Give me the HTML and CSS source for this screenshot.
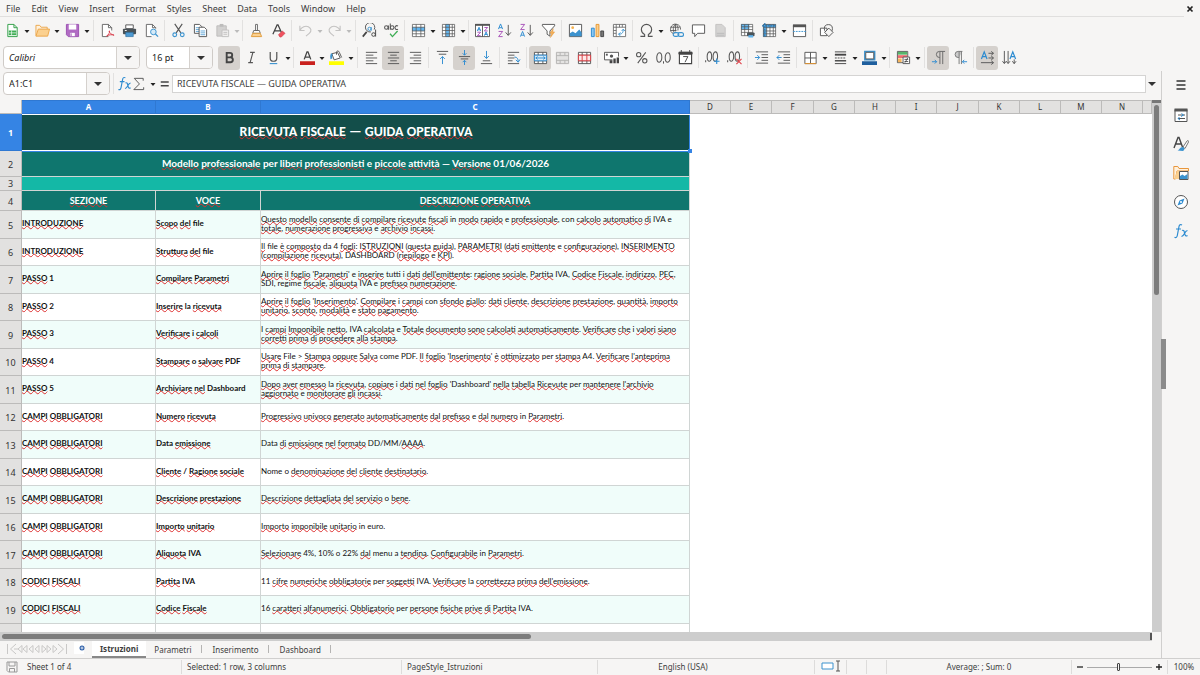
FILE: index.html
```html
<!DOCTYPE html>
<html lang="it">
<head>
<meta charset="utf-8">
<title>Ricevuta fiscale</title>
<link rel="stylesheet" href="styles.css">
</head>
<body>
<svg class="sprite" aria-hidden="true">
  <symbol id="new" viewBox="0 0 16 16"><path d="M3 1.5h6.500l3.500 3.500v9.500H3z" fill="#fff" stroke="#2f9e44"/><path d="M9.500 1.500V5H13" fill="none" stroke="#2f9e44"/><path d="M4 8h8v5H4z" fill="#3fae55"/><path d="M4 10.500h8M7 8v5" stroke="#fff" stroke-width=".7"/></symbol>
  <symbol id="open" viewBox="0 0 16 16"><path d="M1 13.500V2.500h4l1.500 2H13V7" fill="#fff1dc" stroke="#eba54a"/><path d="M3.500 6.500h12l-2 7.500H1z" fill="#fbd08f" stroke="#eba54a"/></symbol>
  <symbol id="save" viewBox="0 0 16 16"><path d="M1.500 1.500h13v13h-11l-2-2z" fill="#b16bc4" stroke="#9a4fb0"/><path d="M4 1.500h8v5.500H4z" fill="#fff"/><path d="M5 10h6v4.500H5z" fill="#fff" stroke="#9a4fb0" stroke-width=".7"/><path d="M6.500 11v3" stroke="#9a4fb0"/></symbol>
  <symbol id="pdf" viewBox="0 0 16 16"><path d="M12.500 8V5L9 1.500H2.500v13H9" fill="#fff" stroke="#666"/><path d="M9 1.500V5h3.500" fill="none" stroke="#666"/><path d="M7 14c2-1 3.500-4 3.200-5.500-1-1-.8 3 4.800 4.500-2-1-6-.5-8 1z" fill="none" stroke="#d83a48"/></symbol>
  <symbol id="print" viewBox="0 0 16 16"><path d="M4 2h8v4H4z" fill="#fff" stroke="#555"/><rect x="1" y="6" width="14" height="6" rx="1" fill="#4a5257"/><path d="M4 10h8v4.500H4z" fill="#4d9ad3" stroke="#2e6e9e" stroke-width=".7"/><path d="M3 8h2" stroke="#fff"/></symbol>
  <symbol id="preview" viewBox="0 0 16 16"><path d="M12.500 6V5L9 1.500H2.500v13H8" fill="#fff" stroke="#666"/><path d="M9 1.500V5h3.500" fill="none" stroke="#666"/><circle cx="10" cy="9.500" r="3" fill="#d5eaf8" stroke="#3c93cf"/><path d="M12.200 11.700 15 14.500" stroke="#3c93cf" stroke-width="1.300"/></symbol>
  <symbol id="cut" viewBox="0 0 16 16"><path d="M4 1l6.500 9.500M12 1 5.500 10.500" stroke="#555" stroke-width="1.200"/><circle cx="4" cy="12.500" r="2" fill="none" stroke="#3c93cf" stroke-width="1.200"/><circle cx="12" cy="12.500" r="2" fill="none" stroke="#3c93cf" stroke-width="1.200"/></symbol>
  <symbol id="copy" viewBox="0 0 16 16"><path d="M1.500 1.500H7L9.500 4v7h-8z" fill="#fff" stroke="#555"/><path d="M3 5h4M3 7h4M3 9h4" stroke="#3c93cf" stroke-width=".8"/><path d="M6.500 4.500H12L14.500 7v7.500h-8z" fill="#fff" stroke="#555"/><path d="M8 8.500h5M8 10.500h5M8 12.500h5" stroke="#3c93cf" stroke-width=".8"/></symbol>
  <symbol id="paste" viewBox="0 0 16 16"><path d="M2 3h10v11H2z" fill="#d2d1d0" stroke="#bdbcbb"/><path d="M5 1h4v3H5z" fill="#bdbcbb"/><path d="M7.500 7.500h7v7h-7z" fill="#f0efee" stroke="#c2c1c0"/><path d="M9 10h4M9 12h4" stroke="#c2c1c0"/></symbol>
  <symbol id="brush" viewBox="0 0 16 16"><path d="M7 1.500h2V8H7zM5 8h6l1 3H4z" fill="#fff" stroke="#666"/><path d="M4 11h8l1.500 3.500h-11z" fill="#fbd08f" stroke="#e09b3a"/></symbol>
  <symbol id="clear" viewBox="0 0 16 16"><path d="M2 12 6.500 2h1L12 12M4 8.500h6" fill="none" stroke="#444" stroke-width="1.300"/><path d="M8 12.500l4-4 3 2.500-4 4H9.500z" fill="#f0525f" stroke="#c93644" stroke-width=".6"/></symbol>
  <symbol id="undo" viewBox="0 0 16 16"><path d="M2 3v5h5M2 8c2-4 6-5.500 9-4s4 4.500 1 7L8.500 14" fill="none" stroke="#c4c3c2" stroke-width="1.200"/></symbol>
  <symbol id="redo" viewBox="0 0 16 16"><path d="M14 3v5H9M14 8c-2-4-6-5.500-9-4s-4 4.500-1 7L7.500 14" fill="none" stroke="#c4c3c2" stroke-width="1.200"/></symbol>
  <symbol id="find" viewBox="0 0 16 16"><path d="M9.500 9.500A5 5 0 1 1 13 7" fill="none" stroke="#555"/><path d="M5 9.500.8 14.500" stroke="#444" stroke-width="1.800"/><circle cx="8" cy="6.200" r="1.700" fill="none" stroke="#3c93cf"/><path d="M9.800 4.300v4" stroke="#3c93cf"/><circle cx="12.300" cy="12.300" r="1.900" fill="none" stroke="#444"/><path d="M14.500 7v7.500" stroke="#444"/></symbol>
  <symbol id="spell" viewBox="0 0 16 16"><g fill="none" stroke="#555" stroke-width="1.100"><circle cx="2.500" cy="4.800" r="1.900"/><path d="M4.700 2.700v4.500M6.700.5v6.700M14.900 3.300a2 2 0 1 0 0 3.200"/><circle cx="8.700" cy="4.900" r="1.900"/></g><path d="M6.500 11.500 9 14.500 14.500 8.500" fill="none" stroke="#3fae55" stroke-width="1.400"/></symbol>
  <symbol id="row" viewBox="0 0 16 16"><path d="M1 1h14v14H1z" fill="#fff"/><path d="M1 4.500h14v4H1z" fill="#63b5ee"/><path d="M1.500 1.500h13v13h-13zM1.500 4.500h13M1.500 8.500h13M1.500 11.500h13M5.500 1.500v13M10.500 1.500v13" fill="none" stroke="#555" stroke-width=".8"/></symbol>
  <symbol id="col" viewBox="0 0 16 16"><path d="M1 1h14v14H1z" fill="#fff"/><path d="M5 1h4v14H5z" fill="#63b5ee"/><path d="M1.500 1.500h13v13h-13zM1.500 4.500h13M1.500 8h13M1.500 11.500h13M5 1.500v13M9 1.500v13M12 1.500v13" fill="none" stroke="#555" stroke-width=".8"/></symbol>
  <symbol id="sort" viewBox="0 0 16 16"><path d="M.5 1.500h15v13H.5zM8 1.500v13" fill="#fff" stroke="#555"/><path d="M0 1h16v2H0z" fill="#555"/><path d="M2.500 8.500 4.300 4.500 6 8.500M3 7.200h2.700M10 13.500l1.800-4 1.700 4M10.500 12.200h2.700" fill="none" stroke="#2d8bd0"/><path d="M2.500 9.800H6l-3.500 3.700H6M10 4.800h3.500L10 8.500h3.500" fill="none" stroke="#a64fb8"/></symbol>
  <symbol id="az" viewBox="0 0 16 16"><path d="M1.500 6.500 3.800 1 6 6.500M2.300 5h3" fill="none" stroke="#2d8bd0"/><path d="M1.700 9H6l-4.300 5.500H6" fill="none" stroke="#a64fb8"/><path d="M12 2v11M9.200 10 12 13.200 14.800 10" fill="none" stroke="#555"/></symbol>
  <symbol id="za" viewBox="0 0 16 16"><path d="M1.500 14.500 3.800 9 6 14.500M2.300 13h3" fill="none" stroke="#2d8bd0"/><path d="M1.700 1.500H6L1.700 7H6" fill="none" stroke="#a64fb8"/><path d="M12 2v11M9.200 10 12 13.200 14.800 10" fill="none" stroke="#555"/></symbol>
  <symbol id="filter" viewBox="0 0 16 16"><path d="M1.500 1.500h13V3L9.500 8.500V14L6.500 12V8.500L1.500 3z" fill="#fff" stroke="#555"/><path d="M13 6 9.500 11h2L10 15.500l4.500-6h-2z" fill="#f6b25a" stroke="#df8e2d" stroke-width=".5"/></symbol>
  <symbol id="image" viewBox="0 0 16 16"><path d="M1.500 1.500h13v13h-13z" fill="#fff" stroke="#555"/><circle cx="5" cy="5" r="1.500" fill="#f5b24f"/><path d="M2 14v-3l3-2 3 2 4-4 2.500 3v4z" fill="#3c93cf"/></symbol>
  <symbol id="chart" viewBox="0 0 16 16"><path d="M1.500 5.500h3v9h-3z" fill="#8cc8f2" stroke="#2d8bd0"/><path d="M6.500 1.500h3v13h-3z" fill="#fbd08f" stroke="#e8962e"/><path d="M11.500 8.500h3v6h-3z" fill="#777" stroke="#444"/></symbol>
  <symbol id="pivot" viewBox="0 0 16 16"><path d="M1.500 1.500h13v13h-13zM1.500 4.500h13M4.500 1.500v13M8 1.500v3M11 1.500v3M1.500 8h3M1.500 11h3" fill="#fff" stroke="#666" stroke-width=".9"/><path d="M7 12c4 0 5-2 5-5M7 12l2-2M7 12l2 1.800M12 6.500 10.300 8.500M12 6.500 13.700 8.500" fill="none" stroke="#3c93cf"/></symbol>
  <symbol id="omega" viewBox="0 0 16 16"><path d="M1.500 14.300H6v-2A6 6 0 0 1 2.500 7a5.500 5.500 0 0 1 11 0A6 6 0 0 1 10 12.300v2h4.500" fill="none" stroke="#555" stroke-width="1.200"/></symbol>
  <symbol id="link" viewBox="0 0 16 16"><path d="M5 11.500A5.300 5.300 0 1 1 12.300 7M1.500 4.500h10M1.500 8H8M7 1c-3 3-3 7-1 10M7 1c2.500 2 3 4 2.500 7M7 1v8" fill="none" stroke="#555" stroke-width=".9"/><rect x="4.500" y="10.300" width="6" height="4" rx="2" fill="none" stroke="#3c93cf" stroke-width="1.200"/><rect x="9.500" y="10.300" width="6" height="4" rx="2" fill="none" stroke="#3c93cf" stroke-width="1.200"/></symbol>
  <symbol id="comment" viewBox="0 0 16 16"><path d="M1.500 2h13v9H7l-3 3.500V11H1.500z" fill="#fff" stroke="#555"/></symbol>
  <symbol id="page" viewBox="0 0 16 16"><path d="M3 1.500h6.500L13 5v9.500H3z" fill="#d5d4d3" stroke="#c3c2c1"/><path d="M4 11h8M4 13h8" stroke="#bbb"/></symbol>
  <symbol id="area" viewBox="0 0 16 16"><path d="M1 1h13v13H1z" fill="#fff"/><path d="M1 1h9v6H1z" fill="#63b5ee"/><path d="M1.500 1.500h12v12h-12zM1.500 4h12M1.500 7h12M1.500 10h12M5 1.500v12M9 1.500v12" fill="none" stroke="#555" stroke-width=".8"/><rect x="7.500" y="10" width="8" height="4" rx="1" fill="#4a5257"/><path d="M9 13h5v2.500H9z" fill="#63b5ee"/></symbol>
  <symbol id="freeze" viewBox="0 0 16 16"><path d="M1 1h14v14H1z" fill="#fff"/><path d="M1 1h14v4H5v10H1z" fill="#63b5ee"/><path d="M1.500 1.500h13v13h-13zM1.500 5h13M1.500 8.500h13M1.500 11.500h13M5 1.500v13M8.500 1.500v13M12 1.500v13" fill="none" stroke="#555" stroke-width=".8"/><path d="M3 0v15M0 3h15" stroke="#2472ad" stroke-width="1.200" stroke-dasharray="2 1"/></symbol>
  <symbol id="split" viewBox="0 0 16 16"><path d="M1.500 2.500h13v12h-13z" fill="#fff" stroke="#555"/><path d="M1 1.500h14v3H1z" fill="#555"/><path d="M1 9h14" stroke="#3c93cf" stroke-dasharray="2 1"/></symbol>
  <symbol id="shapes" viewBox="0 0 16 16"><path d="M1.500 5.500h7v8h-7z" fill="#fff" stroke="#555"/><circle cx="10" cy="6" r="4.300" fill="none" stroke="#555"/><path d="M10.500 5.500 15 10l-4.500 4.500L6 10z" fill="#f6f5f4" stroke="#555"/></symbol>

  <symbol id="bold" viewBox="0 0 16 16"><path d="M5 3h3.500a2.400 2.400 0 0 1 0 4.800H5zM5 7.800h4a2.600 2.600 0 0 1 0 5.200H5z" fill="none" stroke="#444" stroke-width="2"/></symbol>
  <symbol id="italic" viewBox="0 0 16 16"><path d="M6.500 2.500h5M4.500 13.500h5M9.500 2.500l-3 11" fill="none" stroke="#555" stroke-width="1.200"/></symbol>
  <symbol id="under" viewBox="0 0 16 16"><path d="M4.500 2v6.500a3.500 3.500 0 0 0 7 0V2" fill="none" stroke="#555" stroke-width="1.300"/><path d="M4 14.500h8" stroke="#3c93cf" stroke-width="1.200"/></symbol>
  <symbol id="fcolor" viewBox="0 0 16 16"><path d="M4.500 10 7.500 2h1l3 8M5.700 7.500h4.600" fill="none" stroke="#444" stroke-width="1.400"/><path d="M0 12h16v4H0z" fill="#c9211e"/></symbol>
  <symbol id="bucket" viewBox="0 0 16 16"><path d="M3 4l2.500 6.500 6.500-2L9 2.500z" fill="#fff" stroke="#555"/><path d="M3 4C2 6 2 8 2.500 9.500" stroke="#3c93cf" stroke-width="2" fill="none"/><path d="M8 5V2.500c0-2 2.500-2 3 0L13.500 8" fill="none" stroke="#555"/><path d="M0 12h16v4H0z" fill="#ffff00"/></symbol>
  <symbol id="left" viewBox="0 0 16 16"><path d="M2 2.500h12M2 5.500h8M2 8.500h12M2 11.500h8M2 14.500h12" stroke="#555"/></symbol>
  <symbol id="center" viewBox="0 0 16 16"><path d="M2 2.500h12M4.500 5.500h7M2 8.500h12M4.500 11.500h7M2 14.500h12" stroke="#555"/></symbol>
  <symbol id="right" viewBox="0 0 16 16"><path d="M2 2.500h12M6 5.500h8M2 8.500h12M6 11.500h8M2 14.500h12" stroke="#555"/></symbol>
  <symbol id="top" viewBox="0 0 16 16"><path d="M2 1.500h12M4 4.500h8" stroke="#555"/><path d="M8 15V7M5.500 9.500 8 7l2.500 2.500" fill="none" stroke="#2d8bd0"/></symbol>
  <symbol id="middle" viewBox="0 0 16 16"><path d="M2 7h12M4 9.500h8" stroke="#555"/><path d="M8 0v5.500M6 3.500l2 2 2-2M8 16v-5M6 13l2-2 2 2" fill="none" stroke="#2d8bd0"/></symbol>
  <symbol id="bottom" viewBox="0 0 16 16"><path d="M2 14.500h12M4 11.500h8" stroke="#555"/><path d="M8 1v8M5.500 6.500 8 9l2.500-2.500" fill="none" stroke="#2d8bd0"/></symbol>
  <symbol id="wrap" viewBox="0 0 16 16"><path d="M2 2.500h12M2 5.500h7M2 8.500h7M2 14.500h12M2 11.500h5" stroke="#555"/><path d="M9 7.500c3 0 4 2 4 5M10.500 10.500 13 13l2-3" fill="none" stroke="#2d8bd0"/></symbol>
  <symbol id="mergec" viewBox="0 0 16 16"><path d="M1.500 2.500h13v12h-13zM1.500 5.500h13M1.500 11.500h13M5.500 2.500v3M10.500 2.500v3M5.500 11.500v3M10.500 11.500v3" fill="#fff" stroke="#555"/><path d="M1.500 5.500h13v6h-13zM3 8.500h10M5 7 3 8.500 5 10M11 7l2 1.500-2 1.500" fill="#d8ecfa" stroke="#2d8bd0"/></symbol>
  <symbol id="merge" viewBox="0 0 16 16"><path d="M1.500 2.500h13v12h-13zM1.500 6h13M1.500 11h13M5.500 2.500V6M10.500 2.500V6M5.500 11v3.500M10.500 11v3.500" fill="#e4e3e2" stroke="#b4b3b2"/></symbol>
  <symbol id="unmerge" viewBox="0 0 16 16"><path d="M1.500 2.500h13v12h-13zM1.500 5.500h13M1.500 11.500h13M5.500 2.500v12M10.500 2.500v12" fill="#fff" stroke="#555"/><path d="M1.500 5.500h13v6h-13zM5.500 5.500v6M10.500 5.500v6" fill="#fde8e8" stroke="#d8393f"/></symbol>
  <symbol id="money" viewBox="0 0 16 16"><path d="M9 10.500H.5v-8h15V7" fill="#fff" stroke="#555"/><path d="M2 4h2v2H2z" fill="#555"/><circle cx="8" cy="6.500" r="1.800" fill="#555"/><path d="M6 11h3v3H6zM10 9h2.500v5H10zM13.500 8H16v6h-2.500z" fill="#444"/></symbol>
  <symbol id="percent" viewBox="0 0 16 16"><g fill="none" stroke="#555" stroke-width="1.100"><circle cx="5" cy="5" r="2.300"/><circle cx="11.500" cy="11.500" r="2.300"/><path d="M12.500 2.500 4 14"/></g></symbol>
  <symbol id="number" viewBox="0 0 16 16"><g fill="none" stroke="#555" stroke-width="1.100"><ellipse cx="3.500" cy="8" rx="2.700" ry="5"/><ellipse cx="12.500" cy="8" rx="2.700" ry="5"/><path d="M8 12v2.500"/></g></symbol>
  <symbol id="date" viewBox="0 0 16 16"><path d="M1.500 2.500h13v12h-13z" fill="#fff" stroke="#444" stroke-width="1.200"/><path d="M1 2.500h14v2H1zM3.500 0v3M12.500 0v3" fill="#444" stroke="#444"/><path d="M5.500 7h5L7.500 13" fill="none" stroke="#444"/></symbol>
  <symbol id="adddec" viewBox="0 0 16 16"><g fill="none" stroke="#555" stroke-width="1.100"><path d="M.7 11v2"/><ellipse cx="4.700" cy="7" rx="2.400" ry="5"/><ellipse cx="11" cy="7" rx="2.400" ry="5"/></g><path d="M12.500 9v6M9.500 12h6" stroke="#2d8bd0" stroke-width="1.200"/></symbol>
  <symbol id="deldec" viewBox="0 0 16 16"><g fill="none" stroke="#555" stroke-width="1.100"><path d="M.7 11v2"/><ellipse cx="4.700" cy="7" rx="2.400" ry="5"/><ellipse cx="11" cy="7" rx="2.400" ry="5"/></g><path d="M10 9.500l5.500 5.500M15.500 9.500 10 15" stroke="#e0444c" stroke-width="1.200"/></symbol>
  <symbol id="indent" viewBox="0 0 16 16"><path d="M2 2h13M8 5h7M8 8h7M8 11h7M2 14h13" stroke="#555"/><path d="M1 8h5M3.500 5.500 6 8l-2.500 2.500" fill="none" stroke="#2d8bd0"/></symbol>
  <symbol id="outdent" viewBox="0 0 16 16"><path d="M2 2h13M8 5h7M8 8h7M8 11h7M2 14h13" stroke="#555"/><path d="M6 8H1M3.500 5.500 1 8l2.500 2.500" fill="none" stroke="#2d8bd0"/></symbol>
  <symbol id="border" viewBox="0 0 16 16"><path d="M2 2.500h12v12H2zM8 2.500v12M2 8.500h12" fill="#fff" stroke="#555"/><path d="M2 14.500h12" stroke="#e8962e"/></symbol>
  <symbol id="lines" viewBox="0 0 16 16"><path d="M2 2h12M2 14.500h12" stroke="#444"/><path d="M2 5h12" stroke="#444" stroke-width="2"/><path d="M2 8.500h12" stroke="#444" stroke-dasharray="2 1"/><path d="M2 11.500h12" stroke="#444" stroke-width="1.500"/></symbol>
  <symbol id="bcolor" viewBox="0 0 16 16"><path d="M3 1.500h10.500v9H3z" fill="#fff" stroke="#3c93cf" stroke-width="1.600"/><path d="M4 2.500h8.500v7H4z" fill="none" stroke="#555"/><path d="M0 12h16v4H0z" fill="#1f5f9e"/></symbol>
  <symbol id="cond" viewBox="0 0 16 16"><path d="M1.500 1.500h11v12h-11z" fill="#fff" stroke="#555"/><path d="M2 2h10v3H2z" fill="#58b56b"/><path d="M2 5.500h10v3H2z" fill="#ef6a70"/><path d="M2 9h4v4H2z" fill="#f7b65e"/><path d="M7.500 7.500h7v7h-7z" fill="#fff" stroke="#555"/><path d="M9 10h4M9 12.300h4M12.500 8.500l-3 5" stroke="#444" stroke-width=".9"/></symbol>
  <symbol id="ltr" viewBox="0 0 16 16"><path d="M9.500 15V1.500M12.500 15V1.500M15 1.500H9a3 3 0 0 0 0 6.500h.5" fill="none" stroke="#666"/><path d="M1 12.500h5M4 10.500l2 2-2 2" fill="none" stroke="#2d8bd0"/></symbol>
  <symbol id="rtl" viewBox="0 0 16 16"><path d="M6.500 15V1.500M9 15V1.500M10 1.500H5.500a3 3 0 0 0 0 6.500h1" fill="#ccc" stroke="#777"/><path d="M15 12.500h-5M12 10.500l-2 2 2 2" fill="none" stroke="#2d8bd0"/></symbol>
  <symbol id="horiz" viewBox="0 0 16 16"><path d="M1.500 9.500 4.500 2l3 7.500M2.500 7h4" fill="none" stroke="#2d8bd0" stroke-width="1.300"/><path d="M9 3.500h5M12 1.500l2.500 2-2.500 2M9 8.500h5M12 6.500l2.500 2-2.500 2M1 13.500h13M12 11.500l2.500 2-2.500 2" fill="none" stroke="#555"/></symbol>
  <symbol id="vert" viewBox="0 0 16 16"><path d="M8.500 9.500 11.500 2l3 7.500M9.500 7h4" fill="none" stroke="#2d8bd0" stroke-width="1.300"/><path d="M2.500 1v13M.5 12l2 2.500 2-2.500M6.500 1v13M4.500 12l2 2.500 2-2.500M13 10v4.500M11 12l2 2.500 2-2.500" fill="none" stroke="#555"/></symbol>
  <symbol id="fx" viewBox="0 0 16 16"><path d="M9 2C7.500 1 6.300 1.800 6 3.500L4.300 12.500C4 14.300 3 15 1.500 14.300M3 6h5M9 7.500c2-1 2.200 1 2.700 3 .5 2.500 1.300 3 2.800 2M14.500 7.500c-1.500 0-2 1-3 3-1 2-1.500 3-3 2.800" fill="none" stroke="#2d8bd0" stroke-width="1.200"/></symbol>
  <symbol id="sigma" viewBox="0 0 16 16"><path d="M13 5V2.500H3.500L9 8.500 3 14.500h10.500V12" fill="none" stroke="#555"/></symbol>
  <symbol id="equals" viewBox="0 0 16 16"><path d="M4 6.500h8.500M4 10.500h8.500" stroke="#444" stroke-width="1.600"/></symbol>
  <symbol id="menu" viewBox="0 0 16 16"><path d="M3.500 4h9M3.500 8h9M3.500 12h9" stroke="#333" stroke-width="1.400"/></symbol>
  <symbol id="props" viewBox="0 0 16 16"><path d="M2 2.500h12v12H2z" fill="#fff" stroke="#555"/><path d="M1.500 1.500h13v3h-13z" fill="#555"/><path d="M5 8h7M5 11.500h7" stroke="#555"/><path d="M8.500 6.500 10.500 8 8 9.500M6.500 10 5 11.500 7 13" fill="none" stroke="#2d8bd0"/></symbol>
  <symbol id="style" viewBox="0 0 16 16"><path d="M1 12 5 1.500h1L9.500 11M2.500 8h6" fill="none" stroke="#444" stroke-width="1.400"/><path d="M10 11l4-6c1-1 2 0 1.500 1L12 12.500z" fill="#fff" stroke="#555" stroke-width=".8"/><path d="M4.500 14.500c2-.5 2.500-3.500 5-3.500 2.500.5 2.500 3 .5 4z" fill="#3c93cf"/></symbol>
  <symbol id="gallery" viewBox="0 0 16 16"><path d="M.8 14V1.500h4L6 3.500h9.500V6H4L2.500 14z" fill="#fff1dc" stroke="#e8963c"/><path d="M4 6h9l-2 8H1.500z" fill="#fbd08f"/><path d="M6.500 6.500h8.500v8H6.500z" fill="#fff" stroke="#555"/><path d="M7 14v-3l2.500-1.500 2 1.500L14.500 9v5z" fill="#3c93cf"/></symbol>
  <symbol id="nav" viewBox="0 0 16 16"><circle cx="8" cy="8" r="6.500" fill="#fff" stroke="#555"/><path d="M11.500 4.500 9.500 9.500 4.500 11.500l2-5z" fill="#2d8bd0"/><circle cx="8" cy="8" r="1" fill="#fff"/></symbol>
  <symbol id="arrow" viewBox="0 0 8 8"><path d="M1.500 3h5L4 6z" fill="#222"/></symbol>
  <symbol id="arrowoff" viewBox="0 0 8 8"><path d="M1.500 3h5L4 6z" fill="#bbb"/></symbol>
  <symbol id="big" viewBox="0 0 8 8"><path d="M0 2h8L4 6z" fill="#333"/></symbol>
</svg>

<nav class="menubar">
  <button>File</button><button>Edit</button><button>View</button><button>Insert</button><button>Format</button><button>Styles</button><button>Sheet</button><button>Data</button><button>Tools</button><button>Window</button><button>Help</button>
  <button class="close" aria-label="Close document"><svg viewBox="0 0 8 8"><path d="M1.500 1.500l5 5M6.500 1.500l-5 5" stroke="#222" stroke-width="1.700"/></svg></button>
</nav>

<div class="toolbar standard" role="toolbar" aria-label="Standard">
  <span class="drop"><button aria-label="New"><svg><use href="#new"/></svg></button><button aria-label="New menu"><svg><use href="#arrow"/></svg></button></span>
  <span class="drop"><button aria-label="Open"><svg><use href="#open"/></svg></button><button aria-label="Open menu"><svg><use href="#arrow"/></svg></button></span>
  <span class="drop"><button aria-label="Save"><svg><use href="#save"/></svg></button><button aria-label="Save menu"><svg><use href="#arrow"/></svg></button></span>
  <i class="sep"></i>
  <button aria-label="Export PDF"><svg><use href="#pdf"/></svg></button>
  <button aria-label="Print"><svg><use href="#print"/></svg></button>
  <button aria-label="Preview"><svg><use href="#preview"/></svg></button>
  <i class="sep"></i>
  <button aria-label="Cut"><svg><use href="#cut"/></svg></button>
  <button aria-label="Copy"><svg><use href="#copy"/></svg></button>
  <span class="drop tight"><button aria-label="Paste"><svg><use href="#paste"/></svg></button><button aria-label="Paste menu"><svg><use href="#arrowoff"/></svg></button></span>
  <i class="sep"></i>
  <button aria-label="Clone formatting"><svg><use href="#brush"/></svg></button>
  <button aria-label="Clear formatting"><svg><use href="#clear"/></svg></button>
  <i class="sep"></i>
  <span class="drop tight"><button aria-label="Undo"><svg><use href="#undo"/></svg></button><button aria-label="Undo menu"><svg><use href="#arrowoff"/></svg></button></span>
  <span class="drop"><button aria-label="Redo"><svg><use href="#redo"/></svg></button><button aria-label="Redo menu"><svg><use href="#arrowoff"/></svg></button></span>
  <i class="sep"></i>
  <button aria-label="Find and replace"><svg><use href="#find"/></svg></button>
  <button aria-label="Spelling"><svg><use href="#spell"/></svg></button>
  <i class="sep"></i>
  <span class="drop"><button aria-label="Row"><svg><use href="#row"/></svg></button><button aria-label="Row menu"><svg><use href="#arrow"/></svg></button></span>
  <span class="drop tight"><button aria-label="Column"><svg><use href="#col"/></svg></button><button aria-label="Column menu"><svg><use href="#arrow"/></svg></button></span>
  <i class="sep"></i>
  <button aria-label="Sort"><svg><use href="#sort"/></svg></button>
  <button aria-label="Sort ascending"><svg><use href="#az"/></svg></button>
  <button aria-label="Sort descending"><svg><use href="#za"/></svg></button>
  <button aria-label="AutoFilter"><svg><use href="#filter"/></svg></button>
  <i class="sep"></i>
  <button aria-label="Image"><svg><use href="#image"/></svg></button>
  <button aria-label="Chart"><svg><use href="#chart"/></svg></button>
  <button aria-label="Pivot table"><svg><use href="#pivot"/></svg></button>
  <i class="sep"></i>
  <span class="drop"><button aria-label="Special character"><svg><use href="#omega"/></svg></button><button aria-label="Special character menu"><svg><use href="#arrow"/></svg></button></span>
  <button aria-label="Hyperlink"><svg><use href="#link"/></svg></button>
  <button aria-label="Comment"><svg><use href="#comment"/></svg></button>
  <button aria-label="Headers and footers"><svg><use href="#page"/></svg></button>
  <i class="sep"></i>
  <button aria-label="Print area"><svg><use href="#area"/></svg></button>
  <span class="drop"><button aria-label="Freeze"><svg><use href="#freeze"/></svg></button><button aria-label="Freeze menu"><svg><use href="#arrow"/></svg></button></span>
  <button aria-label="Split window"><svg><use href="#split"/></svg></button>
  <i class="sep"></i>
  <button aria-label="Draw functions"><svg><use href="#shapes"/></svg></button>
</div>

<div class="toolbar formatting" role="toolbar" aria-label="Formatting">
  <span class="combo font"><input type="text" value="Calibri" aria-label="Font name"><button aria-label="Font list"><svg><use href="#big"/></svg></button></span>
  <span class="combo size"><input type="text" value="16 pt" aria-label="Font size"><button aria-label="Font size list"><svg><use href="#big"/></svg></button></span>
  <button class="on" aria-label="Bold"><svg><use href="#bold"/></svg></button>
  <button aria-label="Italic"><svg><use href="#italic"/></svg></button>
  <span class="drop tight"><button aria-label="Underline"><svg><use href="#under"/></svg></button><button aria-label="Underline menu"><svg><use href="#arrow"/></svg></button></span>
  <i class="sep"></i>
  <span class="drop tight"><button aria-label="Font colour"><svg><use href="#fcolor"/></svg></button><button aria-label="Font colour menu"><svg><use href="#arrow"/></svg></button></span>
  <span class="drop"><button aria-label="Background colour"><svg><use href="#bucket"/></svg></button><button aria-label="Background colour menu"><svg><use href="#arrow"/></svg></button></span>
  <i class="sep"></i>
  <button aria-label="Align left"><svg><use href="#left"/></svg></button>
  <button class="on" aria-label="Align centre"><svg><use href="#center"/></svg></button>
  <button aria-label="Align right"><svg><use href="#right"/></svg></button>
  <i class="sep"></i>
  <button aria-label="Align top"><svg><use href="#top"/></svg></button>
  <button class="on" aria-label="Centre vertically"><svg><use href="#middle"/></svg></button>
  <button aria-label="Align bottom"><svg><use href="#bottom"/></svg></button>
  <i class="sep"></i>
  <button aria-label="Wrap text"><svg><use href="#wrap"/></svg></button>
  <i class="sep"></i>
  <button class="on" aria-label="Merge and centre"><svg><use href="#mergec"/></svg></button>
  <button aria-label="Merge"><svg><use href="#merge"/></svg></button>
  <button aria-label="Unmerge"><svg><use href="#unmerge"/></svg></button>
  <i class="sep"></i>
  <span class="drop"><button aria-label="Currency"><svg><use href="#money"/></svg></button><button aria-label="Currency menu"><svg><use href="#arrow"/></svg></button></span>
  <button aria-label="Percent"><svg><use href="#percent"/></svg></button>
  <button aria-label="Number"><svg><use href="#number"/></svg></button>
  <button aria-label="Date"><svg><use href="#date"/></svg></button>
  <i class="sep"></i>
  <button aria-label="Add decimal"><svg><use href="#adddec"/></svg></button>
  <button aria-label="Delete decimal"><svg><use href="#deldec"/></svg></button>
  <i class="sep"></i>
  <button aria-label="Increase indent"><svg><use href="#indent"/></svg></button>
  <button aria-label="Decrease indent"><svg><use href="#outdent"/></svg></button>
  <i class="sep"></i>
  <span class="drop"><button aria-label="Borders"><svg><use href="#border"/></svg></button><button aria-label="Borders menu"><svg><use href="#arrow"/></svg></button></span>
  <span class="drop tight"><button aria-label="Border style"><svg><use href="#lines"/></svg></button><button aria-label="Border style menu"><svg><use href="#arrow"/></svg></button></span>
  <span class="drop tight"><button aria-label="Border colour"><svg><use href="#bcolor"/></svg></button><button aria-label="Border colour menu"><svg><use href="#arrow"/></svg></button></span>
  <i class="sep"></i>
  <span class="drop"><button aria-label="Conditional"><svg><use href="#cond"/></svg></button><button aria-label="Conditional menu"><svg><use href="#arrow"/></svg></button></span>
  <i class="sep"></i>
  <button class="on" aria-label="Left to right"><svg><use href="#ltr"/></svg></button>
  <button aria-label="Right to left"><svg><use href="#rtl"/></svg></button>
  <i class="sep"></i>
  <button class="on" aria-label="Horizontal text"><svg><use href="#horiz"/></svg></button>
  <button aria-label="Vertical text"><svg><use href="#vert"/></svg></button>
</div>

<main class="work">
  <section class="pane">
    <div class="formula">
      <span class="combo name"><input type="text" value="A1:C1" aria-label="Name box"><button aria-label="Names"><svg><use href="#big"/></svg></button></span>
      <i class="sep"></i>
      <button class="tool" aria-label="Function wizard"><svg><use href="#fx"/></svg></button>
      <span class="drop tight"><button aria-label="Select function"><svg><use href="#sigma"/></svg></button><button aria-label="Function list"><svg><use href="#arrow"/></svg></button></span>
      <button class="tool" aria-label="Formula"><svg><use href="#equals"/></svg></button>
      <input class="line" type="text" value="RICEVUTA FISCALE — GUIDA OPERATIVA" aria-label="Input line">
      <button class="expand" aria-label="Expand formula bar"><svg><use href="#big"/></svg></button>
    </div>
    <div class="view">
      <div class="grid">
        <table>
          <colgroup><col class="c-head"><col class="c-a"><col class="c-b"><col class="c-c"><col class="c-n"><col class="c-n"><col class="c-w"><col class="c-n"><col class="c-n"><col class="c-n"><col class="c-w"><col class="c-n"><col class="c-n"><col class="c-n"><col class="c-n"><col></colgroup>
          <thead><tr><th class="corner"></th><th class="sel">A</th><th class="sel">B</th><th class="sel">C</th><th>D</th><th>E</th><th>F</th><th>G</th><th>H</th><th>I</th><th>J</th><th>K</th><th>L</th><th>M</th><th>N</th><th></th></tr></thead>
          <tbody>
            <tr class="title"><th class="sel">1</th><td colspan="3" data-spell>RICEVUTA FISCALE — GUIDA OPERATIVA<i class="handle"></i></td></tr>
            <tr class="subtitle"><th>2</th><td colspan="3" data-spell>Modello professionale per liberi professionisti e piccole attività — Versione 01/06/2026</td></tr>
            <tr class="band"><th>3</th><td colspan="3"></td></tr>
            <tr class="heads"><th>4</th><td data-spell>SEZIONE</td><td data-spell>VOCE</td><td data-spell>DESCRIZIONE OPERATIVA</td></tr>
            <tr class="row"><th>5</th><td data-spell>INTRODUZIONE</td><td data-spell>Scopo del file</td><td data-spell>Questo modello consente di compilare ricevute fiscali in modo rapido e professionale, con calcolo automatico di IVA e<br>totale, numerazione progressiva e archivio incassi.</td></tr>
            <tr class="row"><th>6</th><td data-spell>INTRODUZIONE</td><td data-spell>Struttura del file</td><td data-spell>Il file è composto da 4 fogli: ISTRUZIONI (questa guida), PARAMETRI (dati emittente e configurazione), INSERIMENTO<br>(compilazione ricevuta), DASHBOARD (riepilogo e KPI).</td></tr>
            <tr class="row"><th>7</th><td data-spell>PASSO 1</td><td data-spell>Compilare Parametri</td><td data-spell>Aprire il foglio 'Parametri' e inserire tutti i dati dell'emittente: ragione sociale, Partita IVA, Codice Fiscale, indirizzo, PEC,<br>SDI, regime fiscale, aliquota IVA e prefisso numerazione.</td></tr>
            <tr class="row"><th>8</th><td data-spell>PASSO 2</td><td data-spell>Inserire la ricevuta</td><td data-spell>Aprire il foglio 'Inserimento'. Compilare i campi con sfondo giallo: dati cliente, descrizione prestazione, quantità, importo<br>unitario, sconto, modalità e stato pagamento.</td></tr>
            <tr class="row"><th>9</th><td data-spell>PASSO 3</td><td data-spell>Verificare i calcoli</td><td data-spell>I campi Imponibile netto, IVA calcolata e Totale documento sono calcolati automaticamente. Verificare che i valori siano<br>corretti prima di procedere alla stampa.</td></tr>
            <tr class="row"><th>10</th><td data-spell>PASSO 4</td><td data-spell>Stampare o salvare PDF</td><td data-spell>Usare File &gt; Stampa oppure Salva come PDF. Il foglio 'Inserimento' è ottimizzato per stampa A4. Verificare l'anteprima<br>prima di stampare.</td></tr>
            <tr class="row"><th>11</th><td data-spell>PASSO 5</td><td data-spell>Archiviare nel Dashboard</td><td data-spell>Dopo aver emesso la ricevuta, copiare i dati nel foglio 'Dashboard' nella tabella Ricevute per mantenere l'archivio<br>aggiornato e monitorare gli incassi.</td></tr>
            <tr class="row"><th>12</th><td data-spell>CAMPI OBBLIGATORI</td><td data-spell>Numero ricevuta</td><td data-spell>Progressivo univoco generato automaticamente dal prefisso e dal numero in Parametri.</td></tr>
            <tr class="row"><th>13</th><td data-spell>CAMPI OBBLIGATORI</td><td data-spell>Data emissione</td><td data-spell>Data di emissione nel formato DD/MM/AAAA.</td></tr>
            <tr class="row"><th>14</th><td data-spell>CAMPI OBBLIGATORI</td><td data-spell>Cliente / Ragione sociale</td><td data-spell>Nome o denominazione del cliente destinatario.</td></tr>
            <tr class="row"><th>15</th><td data-spell>CAMPI OBBLIGATORI</td><td data-spell>Descrizione prestazione</td><td data-spell>Descrizione dettagliata del servizio o bene.</td></tr>
            <tr class="row"><th>16</th><td data-spell>CAMPI OBBLIGATORI</td><td data-spell>Importo unitario</td><td data-spell>Importo imponibile unitario in euro.</td></tr>
            <tr class="row"><th>17</th><td data-spell>CAMPI OBBLIGATORI</td><td data-spell>Aliquota IVA</td><td data-spell>Selezionare 4%, 10% o 22% dal menu a tendina. Configurabile in Parametri.</td></tr>
            <tr class="row"><th>18</th><td data-spell>CODICI FISCALI</td><td data-spell>Partita IVA</td><td data-spell>11 cifre numeriche obbligatorie per soggetti IVA. Verificare la correttezza prima dell'emissione.</td></tr>
            <tr class="row"><th>19</th><td data-spell>CODICI FISCALI</td><td data-spell>Codice Fiscale</td><td data-spell>16 caratteri alfanumerici. Obbligatorio per persone fisiche prive di Partita IVA.</td></tr>
            <tr class="row"><th></th><td></td><td></td><td></td></tr>
          </tbody>
        </table>
      </div>
      <div class="vbar"><i class="thumb"></i></div>
      <div class="hbar"><i class="thumb"></i><i class="mark"></i></div>
    </div>
    <div class="tabs">
      <svg class="steps" viewBox="0 0 64 12"><g fill="none" stroke="#c9c8c7"><path d="M2.500 1v10M11 1 5.500 6 11 11M9 6h4M17 2.500v7l-4-3.500zM22 2.500v7l-4-3.500zM28 2.500v7l-4-3.500zM34 2.500v7l-4-3.500zM37 2.500v7l4-3.500zM42 2.500v7l4-3.500zM48 2.500v7l4-3.500zM53 1l5.500 5L53 11M61.500 1v10"/></g></svg>
      <button class="add" aria-label="Add sheet"><svg viewBox="0 0 12 14"><path d="M1 1h10v12H1z" fill="#fff"/><circle cx="9" cy="7" r="2.500" fill="#2d5fa8"/><path d="M7.500 7h3M9 5.500v3" stroke="#fff" stroke-width=".8"/></svg></button>
      <button class="tab active">Istruzioni</button><button class="tab">Parametri</button><button class="tab">Inserimento</button><button class="tab">Dashboard</button>
    </div>
  </section>
  <aside class="side">
    <button aria-label="Sidebar settings"><svg><use href="#menu"/></svg></button>
    <button aria-label="Properties"><svg><use href="#props"/></svg></button>
    <button aria-label="Styles"><svg><use href="#style"/></svg></button>
    <button aria-label="Gallery"><svg><use href="#gallery"/></svg></button>
    <button aria-label="Navigator"><svg><use href="#nav"/></svg></button>
    <button aria-label="Functions"><svg><use href="#fx"/></svg></button>
    <i class="grip"></i>
  </aside>
</main>

<footer class="status">
  <svg class="disk" viewBox="0 0 12 12"><path d="M1 1h10v10H2.500L1 9.500zM3 1v4h6V1M3.500 11V7.500h5V11" fill="none" stroke="#999"/></svg>
  <span class="s-sheet">Sheet 1 of 4</span>
  <span class="s-sel">Selected: 1 row, 3 columns</span>
  <span class="s-page">PageStyle_Istruzioni</span>
  <span class="s-lang">English (USA)</span>
  <span class="s-mode"><svg viewBox="0 0 22 12"><path d="M2 3h11v6H2z" fill="#fff" stroke="#3c93cf"/><path d="M16 1h4M16 11h4M18 1v10" stroke="#555"/></svg></span>
  <span class="s-small"></span><span class="s-small"></span>
  <span class="s-sum">Average: ; Sum: 0</span>
  <span class="s-zoom"><button aria-label="Zoom out"><svg viewBox="0 0 8 8"><path d="M1 4h6" stroke="#222" stroke-width="1.300"/></svg></button><input type="range" min="0" max="100" value="49" aria-label="Zoom"><button aria-label="Zoom in"><svg viewBox="0 0 8 8"><path d="M1 4h6M4 1v6" stroke="#222" stroke-width="1.300"/></svg></button></span>
  <span class="s-pct">100%</span>
</footer>
<script src="script.js"></script>
</body>
</html>
```

FILE: styles.css
```css
* { box-sizing: border-box; }

body {
  margin: 0;
  height: 100vh;
  display: flex;
  flex-direction: column;
  overflow: hidden;
  background: #f6f5f4;
  color: #3d3d3d;
  font: 9px/12px "Noto Sans", sans-serif;
}

button, input { font: inherit; color: inherit; margin: 0; padding: 0; border: 0; background: none; }
.sprite { display: none; }

/* Menu bar */
.menubar { display: flex; flex: none; height: 17px; padding-left: 6px; gap: 11px; align-items: center; position: relative; }
.menubar::after { content: ""; position: absolute; left: 0; right: 16px; bottom: 0; border-bottom: 1px solid #e0dfde; }
.menubar .close { margin-left: auto; margin-right: 6px; width: 8px; height: 8px; display: flex; }

/* Toolbars */
.toolbar { display: flex; flex: none; align-items: center; }
.standard { height: 27px; padding-left: 1px; }
.formatting { height: 27px; padding-left: 3px; }
.toolbar button, .drop button, .tool { flex: none; width: 22px; height: 24px; display: flex; align-items: center; justify-content: center; }
.toolbar svg, .drop svg, .tool svg { width: 15px; height: 15px; }
.drop { display: flex; flex: none; width: 30px; }
.drop.tight { width: 29px; }
.drop button + button { width: 8px; }
.drop button + button svg { width: 8px; height: 8px; }
.sep { flex: none; width: 1px; height: 21px; margin: 0 2px; background: #e2e1e0; }
.on { background: #d5d1cd; border-radius: 3px; }

.combo { display: flex; flex: none; height: 23px; background: #fff; border: 1px solid #cfcbc7; border-radius: 4px; overflow: hidden; }
.combo input { flex: 1; min-width: 0; padding-left: 5px; color: #222; }
.combo button { flex: none; width: 23px; height: auto; display: flex; align-items: center; justify-content: center; background: #f6f5f4; border-left: 1px solid #d5d1cd; }
.combo button svg { width: 8px; height: 8px; }
.font { width: 137px; margin-right: 6px; }
.font input { font-style: italic; }
.size { width: 67px; margin-right: 5px; }
.name { width: 107px; margin-right: 1px; }

/* Work area */
.work { flex: 1; min-height: 0; display: flex; }
.pane { flex: 1; min-width: 0; display: flex; flex-direction: column; border-right: 1px solid #d0cfce; }
.formula { display: flex; flex: none; align-items: center; height: 29px; padding: 0 5px 4px 3px; }
.formula .line { flex: 1; min-width: 0; height: 18px; padding-left: 4px; background: #fff; border: 1px solid #d5d4d3; }
.formula .expand { display: flex; width: 8px; height: 8px; margin-left: 2px; }
.formula .drop.tight { margin-left: -5px; }
.formula .tool { width: 16px; }

.view { flex: 1; min-height: 0; display: grid; grid-template: 1fr 9px / 1fr 9px; }
.grid { overflow: hidden; background: #fff; }
.vbar { background: #cdcdcd; border-top: 3px solid #777; padding: 2px 2px 0; }
.vbar .thumb { display: block; height: 36%; width: 5px; border-radius: 3px; background: #7c7c7c; }
.hbar { background: #cdcdcd; display: flex; align-items: center; justify-content: space-between; padding-left: 2px; }
.hbar .thumb { width: 46%; height: 5px; border-radius: 3px; background: #7c7c7c; }
.hbar .mark { width: 2px; height: 7px; background: #555; }

/* Sheet */
table { width: 100%; table-layout: fixed; border-collapse: separate; border-spacing: 0; }
.c-head { width: 22px; }
.c-a { width: 134px; }
.c-b { width: 105px; }
.c-c { width: 429px; }
.c-n { width: 41px; }
.c-w { width: 42px; }
th { padding: 0; font-weight: 400; background: #e2e1e0; color: #333; border: 0 solid #bcbbba; border-width: 0 1px 1px 0; font-size: 9px; line-height: 11px; }
thead th { height: 14px; border-top-width: 1px; font-size: 8px; line-height: 10px; padding-bottom: 1px; }
th.corner { background: #f6f5f4; border-top: 0; }
th.sel { background: #3584e4; color: #fff; font-weight: 700; border-color: #2f78d2; }
tbody th { padding-top: 1px; }
td { padding: 0 0 2px; color: #111; border: 0 solid #d0d5d4; border-width: 0 1px 1px 0; font: 8px/9px Lato, Carlito, sans-serif; white-space: nowrap; overflow: hidden; }
.title { height: 37px; }
.title th { padding: 0; }
.title td { position: relative; overflow: visible; background: #134e4a; color: #fff; border: 1px solid #fff; border-width: 1px 0; box-shadow: 0 1px 0 #3584e4, inset -1px 0 0 #3584e4; font-family: Carlito, Lato, sans-serif; font-size: 14px; font-weight: 700; line-height: 16px; text-align: center; }
.handle { position: absolute; right: -2px; bottom: -3px; width: 4px; height: 4px; background: #3584e4; }
.subtitle { height: 26px; }
.subtitle td { background: #0f766e; color: #fff; font-size: 10px; font-weight: 700; line-height: 12px; text-align: center; }
.band { height: 14px; }
.band th { padding-top: 0; }
.band td { background: #14b8a6; }
.heads { height: 20px; }
.heads td { padding-bottom: 0; background: #0f766e; color: #fff; font-size: 9px; font-weight: 700; text-align: center; }
.row { height: 28px; }
.row:nth-child(even) { height: 27px; }
.row:nth-child(odd) td { background: #f0fdfa; }
.row:last-child td { background: #fff; }
.row td:nth-child(2), .row td:nth-child(3) { font-weight: 700; }
.typo { text-decoration: underline wavy #de2f2f 1px; text-decoration-skip-ink: none; text-underline-offset: -1px; }

/* Sheet tabs */
.tabs { display: flex; flex: none; height: 17px; align-items: stretch; padding-left: 5px; font-size: 8px; }
.steps { width: 64px; height: 12px; margin: 2px 4px 0 0; }
.add { width: 12px; margin-right: 7px; }
.add svg { width: 12px; height: 14px; }
.tab { position: relative; padding: 0 8px; margin-right: 5px; }
.tab:not(.active)::after { content: ""; position: absolute; right: -2px; top: 4px; height: 8px; border-right: 1px solid #b5b4b3; }
.tab.active { margin-right: 0; background: #fff; border-bottom: 2px solid #888; font-weight: 700; }

/* Sidebar */
.side { position: relative; flex: none; width: 38px; display: flex; flex-direction: column; align-items: center; gap: 13px; padding-top: 6px; }
.side button { width: 16px; height: 16px; }
.side button:first-child { margin-bottom: 1px; }
.side svg { display: block; width: 16px; height: 16px; }
.grip { position: absolute; left: -1px; top: 268px; width: 5px; height: 50px; background: #8b8b8b; }

/* Status bar */
.status { display: flex; flex: none; align-items: center; height: 17px; border-top: 1px solid #d0cfce; font-size: 8px; }
.status > span { height: 14px; line-height: 14px; }
.status > span + span { border-left: 1px solid #dddcdb; }
.disk { width: 12px; height: 12px; margin: 0 9px 0 6px; }
.s-sheet { width: 154px; }
.s-sel { width: 220px; padding-left: 5px; }
.s-page { width: 196px; padding-left: 5px; }
.s-lang { width: 217px; padding-right: 46px; text-align: center; }
.s-mode { flex: none; width: 32px; padding-left: 5px; }
.s-mode svg { width: 22px; height: 12px; }
.s-small { flex: none; width: 20px; }
.s-sum { flex: 1; text-align: center; }
.s-zoom { flex: none; width: 96px; display: flex; align-items: center; justify-content: center; gap: 3px; }
.s-zoom button { width: 8px; height: 8px; display: flex; }
.s-zoom input { appearance: none; width: 65px; height: 10px; background: linear-gradient(#aaa, #aaa) center / 100% 1px no-repeat; }
.s-zoom input::-webkit-slider-thumb { appearance: none; width: 3px; height: 8px; background: #f6f5f4; border: 1px solid #444; border-radius: 1px; }
.s-pct { flex: none; width: 33px; text-align: center; }
```

FILE: script.js
```javascript
// Underlines every word of the sheet that the English dictionary does not know.
const known = new Set(("in e con iva da file dashboard tutti i sdi regime come pdf per a4 la o a euro menu " +
  "data nome dd mm").split(" "));

function markWords(node) {
  const parts = node.textContent.split(/([\p{L}][\p{L}\d']*[\p{L}\d]|[\p{L}])/u);
  const out = document.createDocumentFragment();
  parts.forEach((part, i) => {
    if (i % 2 && !known.has(part.toLowerCase())) {
      const mark = document.createElement("span");
      mark.className = "typo";
      mark.textContent = part;
      out.append(mark);
    } else {
      out.append(part);
    }
  });
  node.replaceWith(out);
}

document.querySelectorAll("[data-spell]").forEach(cell => {
  [...cell.childNodes].filter(n => n.nodeType === Node.TEXT_NODE).forEach(markWords);
});
```
